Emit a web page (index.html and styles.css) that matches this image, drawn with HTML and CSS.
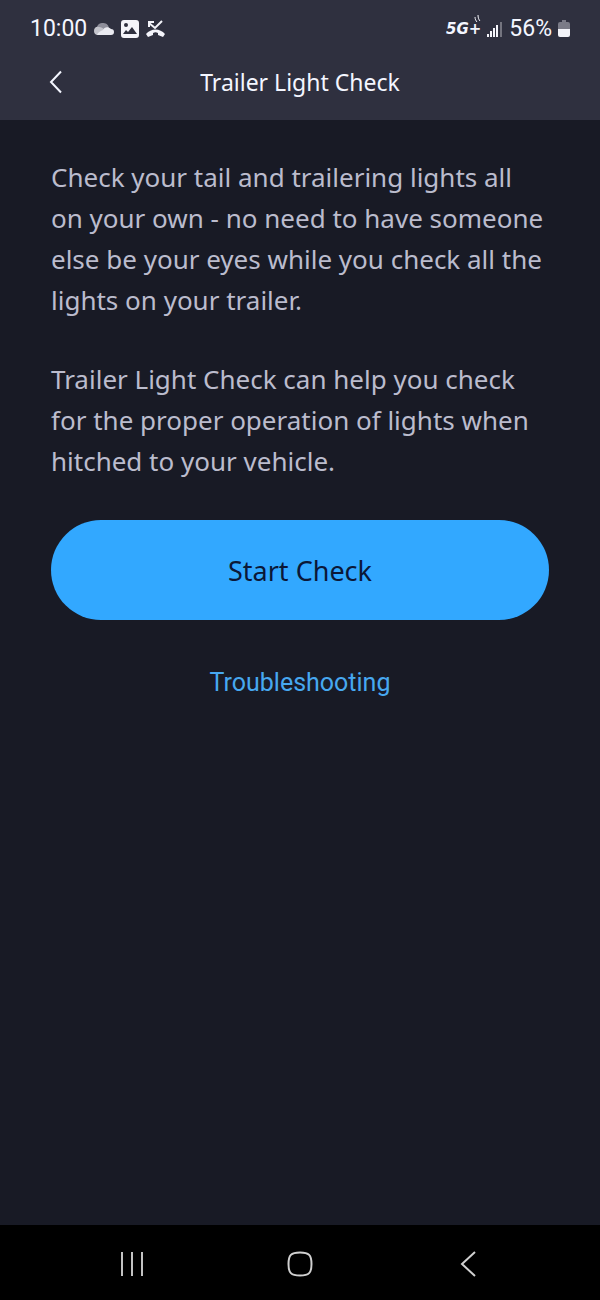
FILE: index.html
```html
<!DOCTYPE html>
<html lang="en">
<head>
    <meta charset="UTF-8">
    <meta name="viewport" content="width=device-width, initial-scale=1.0">
    <title>Trailer Light Check</title>
    <link rel="stylesheet" href="styles.css">
</head>
<body>
    <header class="header">
        <div class="status-bar">
            <div class="status-left">
                <span class="status-text">10:00</span>
                <svg width="20" height="16" viewBox="0 0 20 16">
                    <path d="M3 10C2 6 4 2 8 2c4 0 6 1 7 5l-4 5z" fill="#8e8e9a"/>
                    <path d="M4 14C1 14 0 12 0 10c0-3 2-5 5-4c2 0 4 1 6 3l-1 5z" fill="#c4c4cc"/>
                    <path d="M3 14c1-3 4-4 6-5c1-3 5-4 8-1c2 0 3 1 3 3s-1 3-3 3z" fill="#eaeaf0"/>
                </svg>
                <svg width="18" height="18" viewBox="0 0 18 18">
                    <path fill-rule="evenodd" d="M3 0h12a3 3 0 0 1 3 3v12a3 3 0 0 1-3 3H3a3 3 0 0 1-3-3V3a3 3 0 0 1 3-3zM2 14h14l-5-7l-4 5l-2-2z" fill="#f4f4fa"/>
                    <circle cx="5" cy="5" r="2" fill="#2f303f"/>
                </svg>
                <svg width="19" height="18" viewBox="0 0 19 18">
                    <path d="M16 1L9 8L3 3M3 7V2h5" fill="none" stroke="#f4f4fa" stroke-width="2"/>
                    <path d="M0 14c5-6 14-6 19 0l-2 3l-5-2v-2c-2-1-3-1-5 0v2l-5 2z" fill="#f4f4fa"/>
                </svg>
            </div>
            <div class="status-right">
                <span class="network">5G+
                    <svg class="network-waves" width="7" height="8" viewBox="0 0 7 8">
                        <path d="M1 2c0 2 1 4 2 5M4 0c0 3 1 5 2 6" fill="none" stroke="#f4f4fa"/>
                    </svg>
                </span>
                <svg width="16" height="17" viewBox="0 0 16 17">
                    <path d="M1 13v3M4 10v6M7 7v9M10 4v12" stroke="#f4f4fa" stroke-width="2"/>
                    <path d="M14 1v15" stroke="#74747f" stroke-width="2"/>
                </svg>
                <span class="status-text">56%</span>
                <svg width="12" height="18" viewBox="0 0 12 18">
                    <path d="M4 0h4v2h2a2 2 0 0 1 2 2v5H0V4a2 2 0 0 1 2-2h2z" fill="#7b7b87"/>
                    <path d="M0 9h12v6a2 2 0 0 1-2 2H2a2 2 0 0 1-2-2z" fill="#f4f4fa"/>
                </svg>
            </div>
        </div>
        <div class="title-bar">
            <button type="button" class="icon-btn" aria-label="Back">
                <svg width="14" height="24" viewBox="0 0 14 24">
                    <path d="M12 1.500L2 12l10 10.500" fill="none" stroke="#f4f6ff" stroke-width="2"/>
                </svg>
            </button>
            <h1>Trailer Light Check</h1>
        </div>
    </header>

    <main class="content">
        <p>Check your tail and trailering lights all on your own - no need to have someone else be your eyes while you check all the lights on your trailer.</p>
        <p>Trailer Light Check can help you check for the proper operation of lights when hitched to your vehicle.</p>
        <button type="button" class="start-btn">Start Check</button>
        <a href="#" class="link">Troubleshooting</a>
    </main>

    <nav class="nav-bar">
        <button type="button" class="icon-btn" aria-label="Recent apps">
            <svg width="26" height="26" viewBox="0 0 26 26">
                <path d="M3 1v24M13 1v24M23 1v24" stroke="#c2c2c2" stroke-width="2"/>
            </svg>
        </button>
        <button type="button" class="icon-btn" aria-label="Home">
            <svg width="26" height="26" viewBox="0 0 26 26">
                <path d="M13 1.500C4 1.500 1.500 4 1.500 13S4 24.500 13 24.500S24.500 22 24.500 13S22 1.500 13 1.500z" fill="none" stroke="#d0d0d0" stroke-width="2"/>
            </svg>
        </button>
        <button type="button" class="icon-btn" aria-label="Back">
            <svg width="26" height="26" viewBox="0 0 26 26">
                <path d="M20 1L7 13l13 12" fill="none" stroke="#d0d0d0" stroke-width="2"/>
            </svg>
        </button>
    </nav>
</body>
</html>
```
FILE: styles.css
```css
* {
    box-sizing: border-box;
}
body {
    margin: 0;
    min-height: 100vh;
    display: flex;
    flex-direction: column;
    background-color: #181a25;
    color: #bbbccd;
    font-family: "Noto Sans", sans-serif;
}
.header {
    background-color: #2f303f;
    color: #f4f6ff;
    padding-bottom: 14px;
}
.status-bar {
    display: flex;
    justify-content: space-between;
    align-items: center;
    height: 58px;
    padding: 0 30px;
}
.status-left,
.status-right {
    display: flex;
    align-items: center;
    gap: 7px;
}
.status-right {
    gap: 6px;
}
.status-text {
    font-family: Roboto, sans-serif;
    font-size: 23px;
    line-height: 28px;
}
.network {
    position: relative;
    font-family: "DejaVu Sans", sans-serif;
    font-size: 15px;
    font-weight: bold;
    font-style: italic;
}
.network-waves {
    position: absolute;
    top: -5px;
    right: 0;
}
.title-bar {
    display: grid;
    grid-template-columns: 32px 1fr 32px;
    align-items: center;
    height: 48px;
    padding: 0 40px;
}
h1 {
    margin: 0;
    font-size: 23px;
    line-height: 32px;
    font-weight: normal;
    text-align: center;
}
.icon-btn {
    display: flex;
    justify-content: center;
    align-items: center;
    width: 32px;
    height: 48px;
    padding: 0;
    border: none;
    background: none;
    cursor: pointer;
}
.content {
    flex: 1;
    display: flex;
    flex-direction: column;
    gap: 38px;
    padding: 37px 51px;
}
p {
    margin: 0;
    font-size: 26px;
    line-height: 41px;
}
.start-btn {
    height: 100px;
    border: none;
    border-radius: 50px;
    background-color: #32a8ff;
    color: #0b1838;
    font-family: inherit;
    font-size: 27px;
    cursor: pointer;
}
.link {
    align-self: center;
    margin-top: 6px;
    color: #47a8f0;
    font-family: Roboto, sans-serif;
    font-size: 25px;
    line-height: 38px;
    text-decoration: none;
}
.nav-bar {
    display: flex;
    justify-content: space-around;
    align-items: center;
    height: 75px;
    padding: 2px 48px 0;
    background-color: #000;
}
```
